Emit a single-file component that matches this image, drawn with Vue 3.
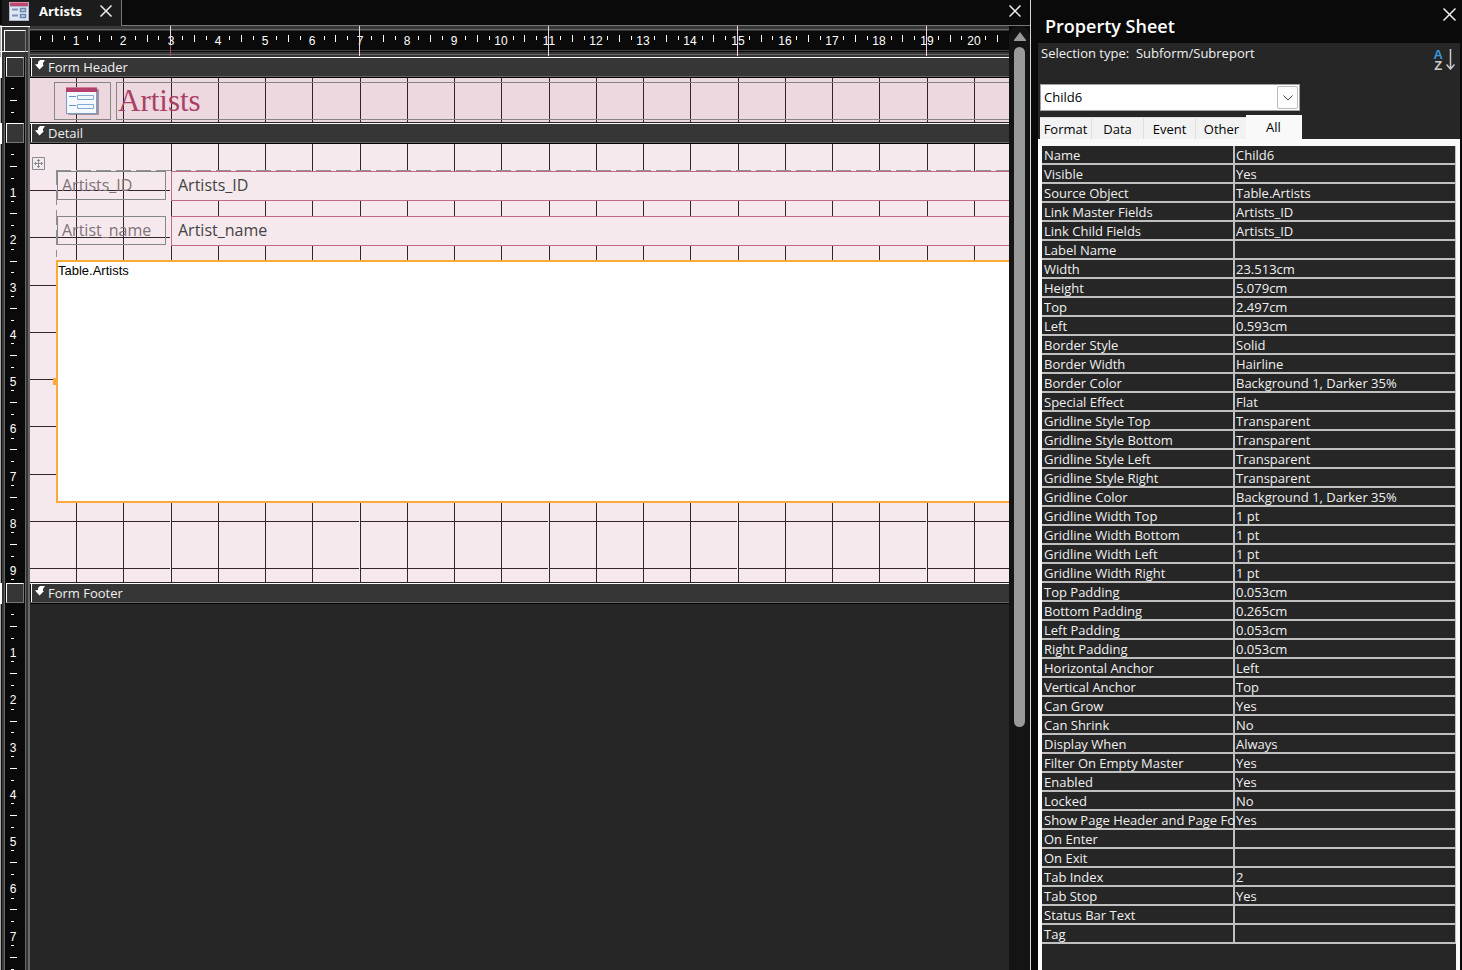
<script setup>
import { computed, onBeforeUnmount, onMounted, ref } from 'vue'

const CM = 47.244
const at = (cm) => Math.round(cm * CM) - 1
const tickAt = (cm) => Math.floor(cm * CM - 0.1) - 1
const range = (n) => Array.from({ length: Math.max(0, n) }, (_, i) => i)
const ticks = (count) =>
  range(count).flatMap((n) => [
    { pos: tickAt(n + 0.25), half: false },
    { pos: tickAt(n + 0.5), half: true },
    { pos: tickAt(n + 0.75), half: false },
  ])

/* Rulers carry as many centimetres as the window has room for. */
const view = ref({ width: window.innerWidth, height: window.innerHeight })
const measure = () => {
  view.value = { width: window.innerWidth, height: window.innerHeight }
}
onMounted(() => window.addEventListener('resize', measure))
onBeforeUnmount(() => window.removeEventListener('resize', measure))

const columnCount = computed(() => Math.floor((view.value.width - 483) / CM))
const columns = computed(() => range(columnCount.value).map((n) => n + 1))
const pageMarks = computed(() => columns.value.filter((n) => n % 4 === 3))
const rulerTicks = computed(() => ticks(columnCount.value + 1))
const footerCount = computed(() => Math.max(0, Math.floor((view.value.height - 610) / CM)))

const sections = computed(() => [
  { id: 'header', title: 'Form Header', cm: 0, ticks: ticks(1) },
  { id: 'detail', title: 'Detail', cm: 9, ticks: ticks(10) },
  { id: 'footer', title: 'Form Footer', cm: footerCount.value, ticks: ticks(footerCount.value + 1) },
])

const tabs = ['Format', 'Data', 'Event', 'Other', 'All']
const activeTab = ref('All')
const selected = ref('Child6')

const properties = [
  ['Name', 'Child6'],
  ['Visible', 'Yes'],
  ['Source Object', 'Table.Artists'],
  ['Link Master Fields', 'Artists_ID'],
  ['Link Child Fields', 'Artists_ID'],
  ['Label Name', ''],
  ['Width', '23.513cm'],
  ['Height', '5.079cm'],
  ['Top', '2.497cm'],
  ['Left', '0.593cm'],
  ['Border Style', 'Solid'],
  ['Border Width', 'Hairline'],
  ['Border Color', 'Background 1, Darker 35%'],
  ['Special Effect', 'Flat'],
  ['Gridline Style Top', 'Transparent'],
  ['Gridline Style Bottom', 'Transparent'],
  ['Gridline Style Left', 'Transparent'],
  ['Gridline Style Right', 'Transparent'],
  ['Gridline Color', 'Background 1, Darker 35%'],
  ['Gridline Width Top', '1 pt'],
  ['Gridline Width Bottom', '1 pt'],
  ['Gridline Width Left', '1 pt'],
  ['Gridline Width Right', '1 pt'],
  ['Top Padding', '0.053cm'],
  ['Bottom Padding', '0.265cm'],
  ['Left Padding', '0.053cm'],
  ['Right Padding', '0.053cm'],
  ['Horizontal Anchor', 'Left'],
  ['Vertical Anchor', 'Top'],
  ['Can Grow', 'Yes'],
  ['Can Shrink', 'No'],
  ['Display When', 'Always'],
  ['Filter On Empty Master', 'Yes'],
  ['Enabled', 'Yes'],
  ['Locked', 'No'],
  ['Show Page Header and Page Fo', 'Yes'],
  ['On Enter', ''],
  ['On Exit', ''],
  ['Tab Index', '2'],
  ['Tab Stop', 'Yes'],
  ['Status Bar Text', ''],
  ['Tag', ''],
]
</script>

<template>
  <div class="app">
    <main class="workspace">
      <header class="docbar">
        <div class="doctab">
          <svg class="form-icon" width="20" height="20" viewBox="0 0 20 20" aria-hidden="true">
            <rect x="0" y="1" width="20" height="19" fill="#a9b6cf" />
            <rect x="1" y="6" width="18" height="13" fill="#dfe7f3" />
            <rect x="1" y="1" width="18" height="4" fill="#c0476f" />
            <path d="M1 1.500H19" stroke="#dc8fab" />
            <path d="M3 8.500H9M3 14.500H9" stroke="#7f93b5" stroke-width="2" />
            <path d="M11.500 7.500h5v3h-5zM11.500 13.500h5v3h-5z" fill="#c8d6ea" stroke="#6d84ab" stroke-width="1.500" />
          </svg>
          <span class="doc-title">Artists</span>
          <button class="close" aria-label="Close tab">
            <svg width="12" height="12" viewBox="0 0 12 12"><path d="M.5 .5 11.500 11.500M11.500 .5 .5 11.500" /></svg>
          </button>
        </div>
        <button class="close close-doc" aria-label="Close document">
          <svg width="12" height="12" viewBox="0 0 12 12"><path d="M.5 .5 11.500 11.500M11.500 .5 .5 11.500" /></svg>
        </button>
      </header>

      <div class="work">
        <div class="designer">
          <div class="ruler-row">
            <div class="corner"><button class="corner-box" aria-label="Select form"></button></div>
            <div class="ruler">
              <svg width="100%" height="31" shape-rendering="crispEdges">
                <rect
                  v-for="t in rulerTicks"
                  :key="t.pos"
                  :x="t.pos"
                  :y="t.half ? 9 : 10"
                  width="1"
                  :height="t.half ? 7 : 4"
                  fill="#fff"
                />
                <text v-for="n in columns" :key="n" :x="at(n)" y="19" text-anchor="middle" class="num">{{ n }}</text>
                <rect v-for="n in pageMarks" :key="'m' + n" :x="at(n) - 1" y="0" width="1" height="30" fill="#f0d5de" />
                <rect :x="at(3) - 1" y="19" width="1" height="11" fill="#a8476a" />
              </svg>
            </div>
          </div>

          <section v-for="s in sections" :key="s.id" class="section" :class="s.id">
            <div class="selector"><button class="selector-box" :aria-label="'Select ' + s.title"></button></div>
            <div class="bar">
              <svg width="10" height="10" viewBox="0 0 10 10" aria-hidden="true">
                <path d="M5 0H10L8 3V5H9L4.500 9.500 0 4.500 3 4V2Z" fill="#fff" />
              </svg>
              <span>{{ s.title }}</span>
            </div>
            <div class="vruler">
              <svg class="fill-svg" width="25" height="100%" shape-rendering="crispEdges">
                <rect
                  v-for="t in s.ticks"
                  :key="t.pos"
                  :x="t.half ? 10 : 11"
                  :y="t.pos"
                  :width="t.half ? 7 : 3"
                  height="1"
                  fill="#fff"
                />
                <text v-for="n in s.cm" :key="n" x="13" :y="at(n) + 7" text-anchor="middle" class="num">{{ n }}</text>
              </svg>
            </div>
            <div class="area">
              <svg v-if="s.id !== 'footer'" class="fill-svg" width="100%" height="100%" shape-rendering="crispEdges">
                <rect v-for="n in s.cm" :key="'r' + n" x="0" :y="at(n)" width="100%" height="1" fill="#33232b" />
                <rect v-for="n in columns" :key="'c' + n" :x="at(n)" y="0" width="1" height="100%" fill="#33232b" />
                <rect v-for="n in pageMarks" :key="'p' + n" :x="at(n) - 1" y="0" width="1" height="100%" class="page-mark" />
              </svg>

              <template v-if="s.id === 'header'">
                <div class="logo-box">
                  <svg width="33" height="28" viewBox="0 0 33 28" aria-hidden="true">
                    <rect x="2" y="2" width="31" height="26" rx="1" fill="#6f6673" opacity=".6" />
                    <rect x=".5" y=".5" width="30" height="26" fill="#f5f8fd" stroke="#7d9cc2" />
                    <rect x="0" y="0" width="31" height="5" fill="#b5416b" />
                    <path d="M0 .5H31" stroke="#cf7f9b" />
                    <path d="M3 9.500H10M3 18.500H10" stroke="#6b94c4" />
                    <path d="M11.500 8.500h16v4h-16zM11.500 17.500h16v4h-16z" fill="#f4f8fd" stroke="#7fabdb" />
                  </svg>
                </div>
                <h1 class="form-title">Artists</h1>
              </template>

              <template v-if="s.id === 'detail'">
                <span class="move-handle">
                  <svg width="13" height="13" viewBox="0 0 13 13" aria-hidden="true">
                    <path d="M.5 .5h12v12h-12zM6.500 2v9M2 6.500h9M5 3.500h3M5 9.500h3M3.500 5v3M9.500 5v3" fill="none" stroke="#868b94" />
                  </svg>
                </span>
                <div class="layout-frame"></div>
                <label class="field-label first" for="field-id">Artists_ID</label>
                <input id="field-id" class="field-box first" value="Artists_ID" readonly />
                <label class="field-label second" for="field-name">Artist_name</label>
                <input id="field-name" class="field-box second" value="Artist_name" readonly />
                <div class="subform">Table.Artists</div>
                <span class="size-handle"></span>
              </template>
            </div>
          </section>
        </div>

        <div class="scrollbar">
          <svg width="12" height="9" viewBox="0 0 12 9" aria-hidden="true">
            <path d="M6 0 12 8V9H0V8Z" fill="#999" />
          </svg>
          <div class="thumb"></div>
        </div>
      </div>
    </main>

    <aside class="sheet">
      <header class="sheet-head">
        <h2>Property Sheet</h2>
        <button class="close" aria-label="Close property sheet">
          <svg width="13" height="13" viewBox="0 0 13 13"><path d="M.5 .5 12.500 12.500M12.500 .5 .5 12.500" /></svg>
        </button>
      </header>
      <div class="sheet-body">
        <div class="selection">
          <p>Selection type:&nbsp; Subform/Subreport</p>
          <button class="sort" aria-label="Sort A to Z">
            <span class="az"><b>A</b><b>Z</b></span>
            <svg width="9" height="21" viewBox="0 0 9 21"><path d="M4.500 0V20M.5 15.500 4.500 20 8.500 15.500" fill="none" stroke="#ccc" stroke-width="1.500" /></svg>
          </button>
        </div>
        <div class="combo">
          <select v-model="selected" aria-label="Selected object">
            <option>Child6</option>
          </select>
          <span class="arrow">
            <svg width="10" height="6" viewBox="0 0 10 6"><path d="M.5 .5 5 5 9.500 .5" fill="none" stroke="#444" /></svg>
          </span>
        </div>
        <div class="tabs" role="tablist">
          <button
            v-for="t in tabs"
            :key="t"
            role="tab"
            :aria-selected="t === activeTab"
            :class="{ active: t === activeTab }"
            @click="activeTab = t"
          >{{ t }}</button>
        </div>
        <div class="page">
          <table>
            <tbody>
              <tr v-for="[name, value] in properties" :key="name">
                <th scope="row">{{ name }}</th>
                <td>{{ value }}</td>
              </tr>
            </tbody>
          </table>
        </div>
      </div>
    </aside>
  </div>
</template>

<style>
body {
  background: #0a0a0a;
}
</style>

<style scoped>
* {
  box-sizing: border-box;
}
.app {
  display: flex;
  height: 100vh;
  overflow: hidden;
  color: #f0f0f0;
  font: 13px/18px 'Open Sans', 'Noto Sans', sans-serif;
}
button {
  padding: 0;
  border: 0;
  background: none;
  color: inherit;
  font: inherit;
}
svg {
  display: block;
  flex: none;
}
.workspace {
  flex: 1;
  min-width: 0;
  display: flex;
  flex-direction: column;
}
.docbar {
  flex: none;
  display: flex;
  justify-content: space-between;
  height: 26px;
  border-bottom: 1px solid #777;
  background: #0a0a0a;
}
.doctab {
  display: flex;
  align-items: center;
  height: 26px;
  margin-left: 2px;
  padding: 0 9px 4px 7px;
  border-right: 1px solid #777;
  background: #1c1c1c;
}
.doc-title {
  margin: 0 18px 0 10px;
  color: #fff;
  font-weight: 700;
}
.close path {
  fill: none;
  stroke: #f0f0f0;
  stroke-width: 1.5;
}
.close-doc {
  margin: 0 9px 4px 0;
}
.work {
  flex: 1;
  min-height: 0;
  display: flex;
}
.designer {
  flex: 1;
  min-width: 0;
  display: flex;
  flex-direction: column;
}
.ruler-row,
.section {
  display: grid;
  grid-template-columns: 30px minmax(0, 1fr);
}
.ruler-row {
  flex: none;
  height: 31px;
}
.corner {
  padding: 3px 0 0 4px;
  border-top: 1px solid #fff;
  background:
    linear-gradient(#fff, #fff) 0 24px / 28px 1px no-repeat,
    linear-gradient(to right, #aaa 1px, #fff 1px 2px, #363636 2px 28px, #666 28px);
}
.corner-box {
  display: block;
  width: 22px;
  height: 22px;
  border: 1px solid #777;
  border-top-color: #fff;
  border-left-color: #fff;
  border-bottom-color: #fff;
  background: #363636;
}
.ruler {
  overflow: hidden;
  background: linear-gradient(#363636 3px, #666 3px 4px, #363636 4px 5px, #0a0a0a 5px 24px, #444 24px 25px, #0a0a0a 25px 26px, #363636 26px 28px, #666 28px 29px, #363636 29px);
}
.num {
  fill: #fff;
  font: 12px 'Liberation Sans', Arial, sans-serif;
}
.section {
  flex: none;
  grid-template-rows: 21px auto;
}
.section.footer {
  flex: 1;
  min-height: 0;
  grid-template-rows: 21px minmax(0, 1fr);
}
.selector {
  padding-left: 6px;
  background: linear-gradient(to right, #fff 2px, #363636 2px 4px, #666 4px 5px, #0a0a0a 5px 6px, #0a0a0a 6px 25px, #666 25px 26px, #363636 26px 28px, #666 28px);
}
.selector-box {
  display: block;
  width: 18px;
  height: 20px;
  border: 1px solid #777;
  border-top-color: #fff;
  border-left-color: #fff;
  background: #363636;
}
.bar {
  display: flex;
  gap: 3px;
  padding-left: 5px;
  border-top: 1px solid #fff;
  border-bottom: 1px solid #000;
  background: linear-gradient(to right, #0a0a0a 1px, #fff 1px 2px, #363636 2px);
  box-shadow: inset 0 -1px #666;
}
.bar svg {
  margin-top: 2px;
}
.bar span {
  line-height: 19px;
}
.vruler {
  position: relative;
  overflow: hidden;
  background: linear-gradient(to right, #aaa 1px, #0a0a0a 1px 2px, #3c3c3c 2px 4px, #666 4px 5px, #0a0a0a 5px 25px, #666 25px 26px, #363636 26px 28px, #666 28px);
}
.area {
  position: relative;
  overflow: hidden;
  border-bottom: 1px solid #2a2226;
  background: #f5e9ed;
}
.header .area {
  height: 45px;
  background: #edd8df;
}
.detail .area {
  height: 439px;
}
.footer .area {
  border: 0;
  background: #262626;
}
.fill-svg {
  position: absolute;
  top: 0;
  left: 0;
}
.page-mark {
  fill: #f8eef1;
}
.header .page-mark {
  fill: #edd8df;
}
.logo-box {
  position: absolute;
  left: 24px;
  top: 4px;
  width: 57px;
  height: 38px;
  padding: 4px 0 0 11px;
  border: 1px solid #868686;
}
.form-title {
  position: absolute;
  left: 86px;
  right: 0;
  top: 4px;
  height: 38px;
  margin: 0;
  padding-left: 1px;
  border: 1px solid #868686;
  border-right: 0;
  color: #ab4067;
  font: 31px/36px 'Liberation Serif', serif;
}
.move-handle {
  position: absolute;
  left: 2px;
  top: 13px;
}
.layout-frame {
  position: absolute;
  left: 26px;
  right: 0;
  top: 26px;
  height: 87px;
  background:
    repeating-linear-gradient(to right, #8f9093 0 15px, transparent 15px 20px) 0 0 / 100% 1px no-repeat,
    repeating-linear-gradient(#8f9093 0 15px, transparent 15px 20px) 0 0 / 1px 100% no-repeat;
}
.field-label,
.field-box {
  position: absolute;
  font: 16px/26px 'Open Sans', 'Noto Sans', sans-serif;
}
.field-label {
  left: 27px;
  width: 109px;
  height: 29px;
  padding-left: 4px;
  border: 1px solid #868686;
  color: #7f7379;
}
.field-box {
  left: 141px;
  width: calc(100% - 141px);
  height: 30px;
  margin: 0;
  padding: 0 6px 2px;
  border: 1px solid #c2698b;
  border-right: 0;
  border-radius: 0;
  outline: 0;
  background: #f5e9ed;
  color: #444;
}
.first {
  top: 27px;
}
.second {
  top: 72px;
}
.subform {
  position: absolute;
  left: 26px;
  right: 0;
  top: 116px;
  height: 243px;
  padding: 1px 0;
  border: 2px solid #fba93b;
  border-right: 0;
  background: #fff;
  color: #000;
  font: 13px/15px 'Liberation Sans', Arial, sans-serif;
}
.size-handle {
  position: absolute;
  left: 23px;
  top: 234px;
  width: 4px;
  height: 7px;
  background: #fba93b;
}
.scrollbar {
  flex: none;
  display: flex;
  flex-direction: column;
  align-items: center;
  gap: 6px;
  width: 21px;
  padding-top: 6px;
  border-radius: 10px 10px 0 0;
  background: #141414;
}
.thumb {
  width: 11px;
  height: 72.5%;
  border-radius: 6px;
  background: #999;
}
.sheet {
  flex: none;
  display: flex;
  flex-direction: column;
  width: 432px;
  padding: 0 2px 0 7px;
  border-left: 1px solid #d8d8d8;
  background: #0a0a0a;
}
.sheet-head {
  flex: none;
  display: flex;
  justify-content: space-between;
  align-items: flex-start;
  height: 43px;
  padding: 8px 4px 0 7px;
}
.sheet-head h2 {
  margin: 0;
  color: #fff;
  font: 600 18px/36px 'Open Sans', 'Noto Sans', sans-serif;
}
.sheet-body {
  flex: 1;
  min-height: 0;
  display: flex;
  flex-direction: column;
  background: #262626;
}
.selection {
  display: flex;
  justify-content: space-between;
  height: 41px;
  padding: 1px 5px 0 3px;
}
.selection p {
  margin: 0;
}
.sort {
  display: flex;
  gap: 3px;
  height: 21px;
  margin-top: 5px;
}
.az {
  display: flex;
  flex-direction: column;
  font: 13px/11px 'Liberation Sans', Arial, sans-serif;
}
.az b:first-child {
  color: #3a96dd;
}
.az b:last-child {
  color: #ccc;
}
.combo {
  position: relative;
  flex: none;
  width: 260px;
  height: 27px;
  margin-left: 2px;
}
.combo select {
  width: 100%;
  height: 100%;
  padding: 0 3px 2px;
  border: 1px solid #a0a0a8;
  border-radius: 0;
  outline: 0;
  appearance: none;
  background: #fff;
  color: #000;
  font: inherit;
}
.arrow {
  position: absolute;
  top: 2px;
  right: 2px;
  bottom: 2px;
  display: grid;
  place-items: center;
  width: 21px;
  border: 1px solid #bbb;
  border-radius: 2px;
  background: #fdfdfd;
  pointer-events: none;
}
.tabs {
  flex: none;
  display: flex;
  align-items: flex-end;
  height: 28px;
  margin-left: 2px;
}
.tabs button {
  width: 52px;
  height: 22px;
  border: 1px solid #e0e0e0;
  border-width: 1px 1px 0 0;
  background: #f2f2f2;
  color: #000;
}
.tabs .active {
  width: 56px;
  height: 24px;
  margin-left: -2px;
  padding-bottom: 2px;
  border-color: #f9f9f9;
  background: #f9f9f9;
}
.page {
  flex: 1;
  min-height: 0;
  padding: 7px 4px 0;
  background: linear-gradient(to right, #fff 4px, #262626 4px) 0 7px / calc(100% - 4px) 100% no-repeat #f9f9f9;
}
table {
  width: 100%;
  border-collapse: separate;
  border-spacing: 0;
  table-layout: fixed;
}
th,
td {
  height: 19px;
  padding: 1px 0 0 2px;
  border-bottom: 2px solid #c0c0c0;
  background: #262626;
  font-weight: 400;
  line-height: 16px;
  text-align: left;
  white-space: nowrap;
}
th {
  width: 193px;
  border-right: 2px solid #c0c0c0;
}
td {
  padding-left: 1px;
  border-right: 1px solid #c0c0c0;
}
</style>
